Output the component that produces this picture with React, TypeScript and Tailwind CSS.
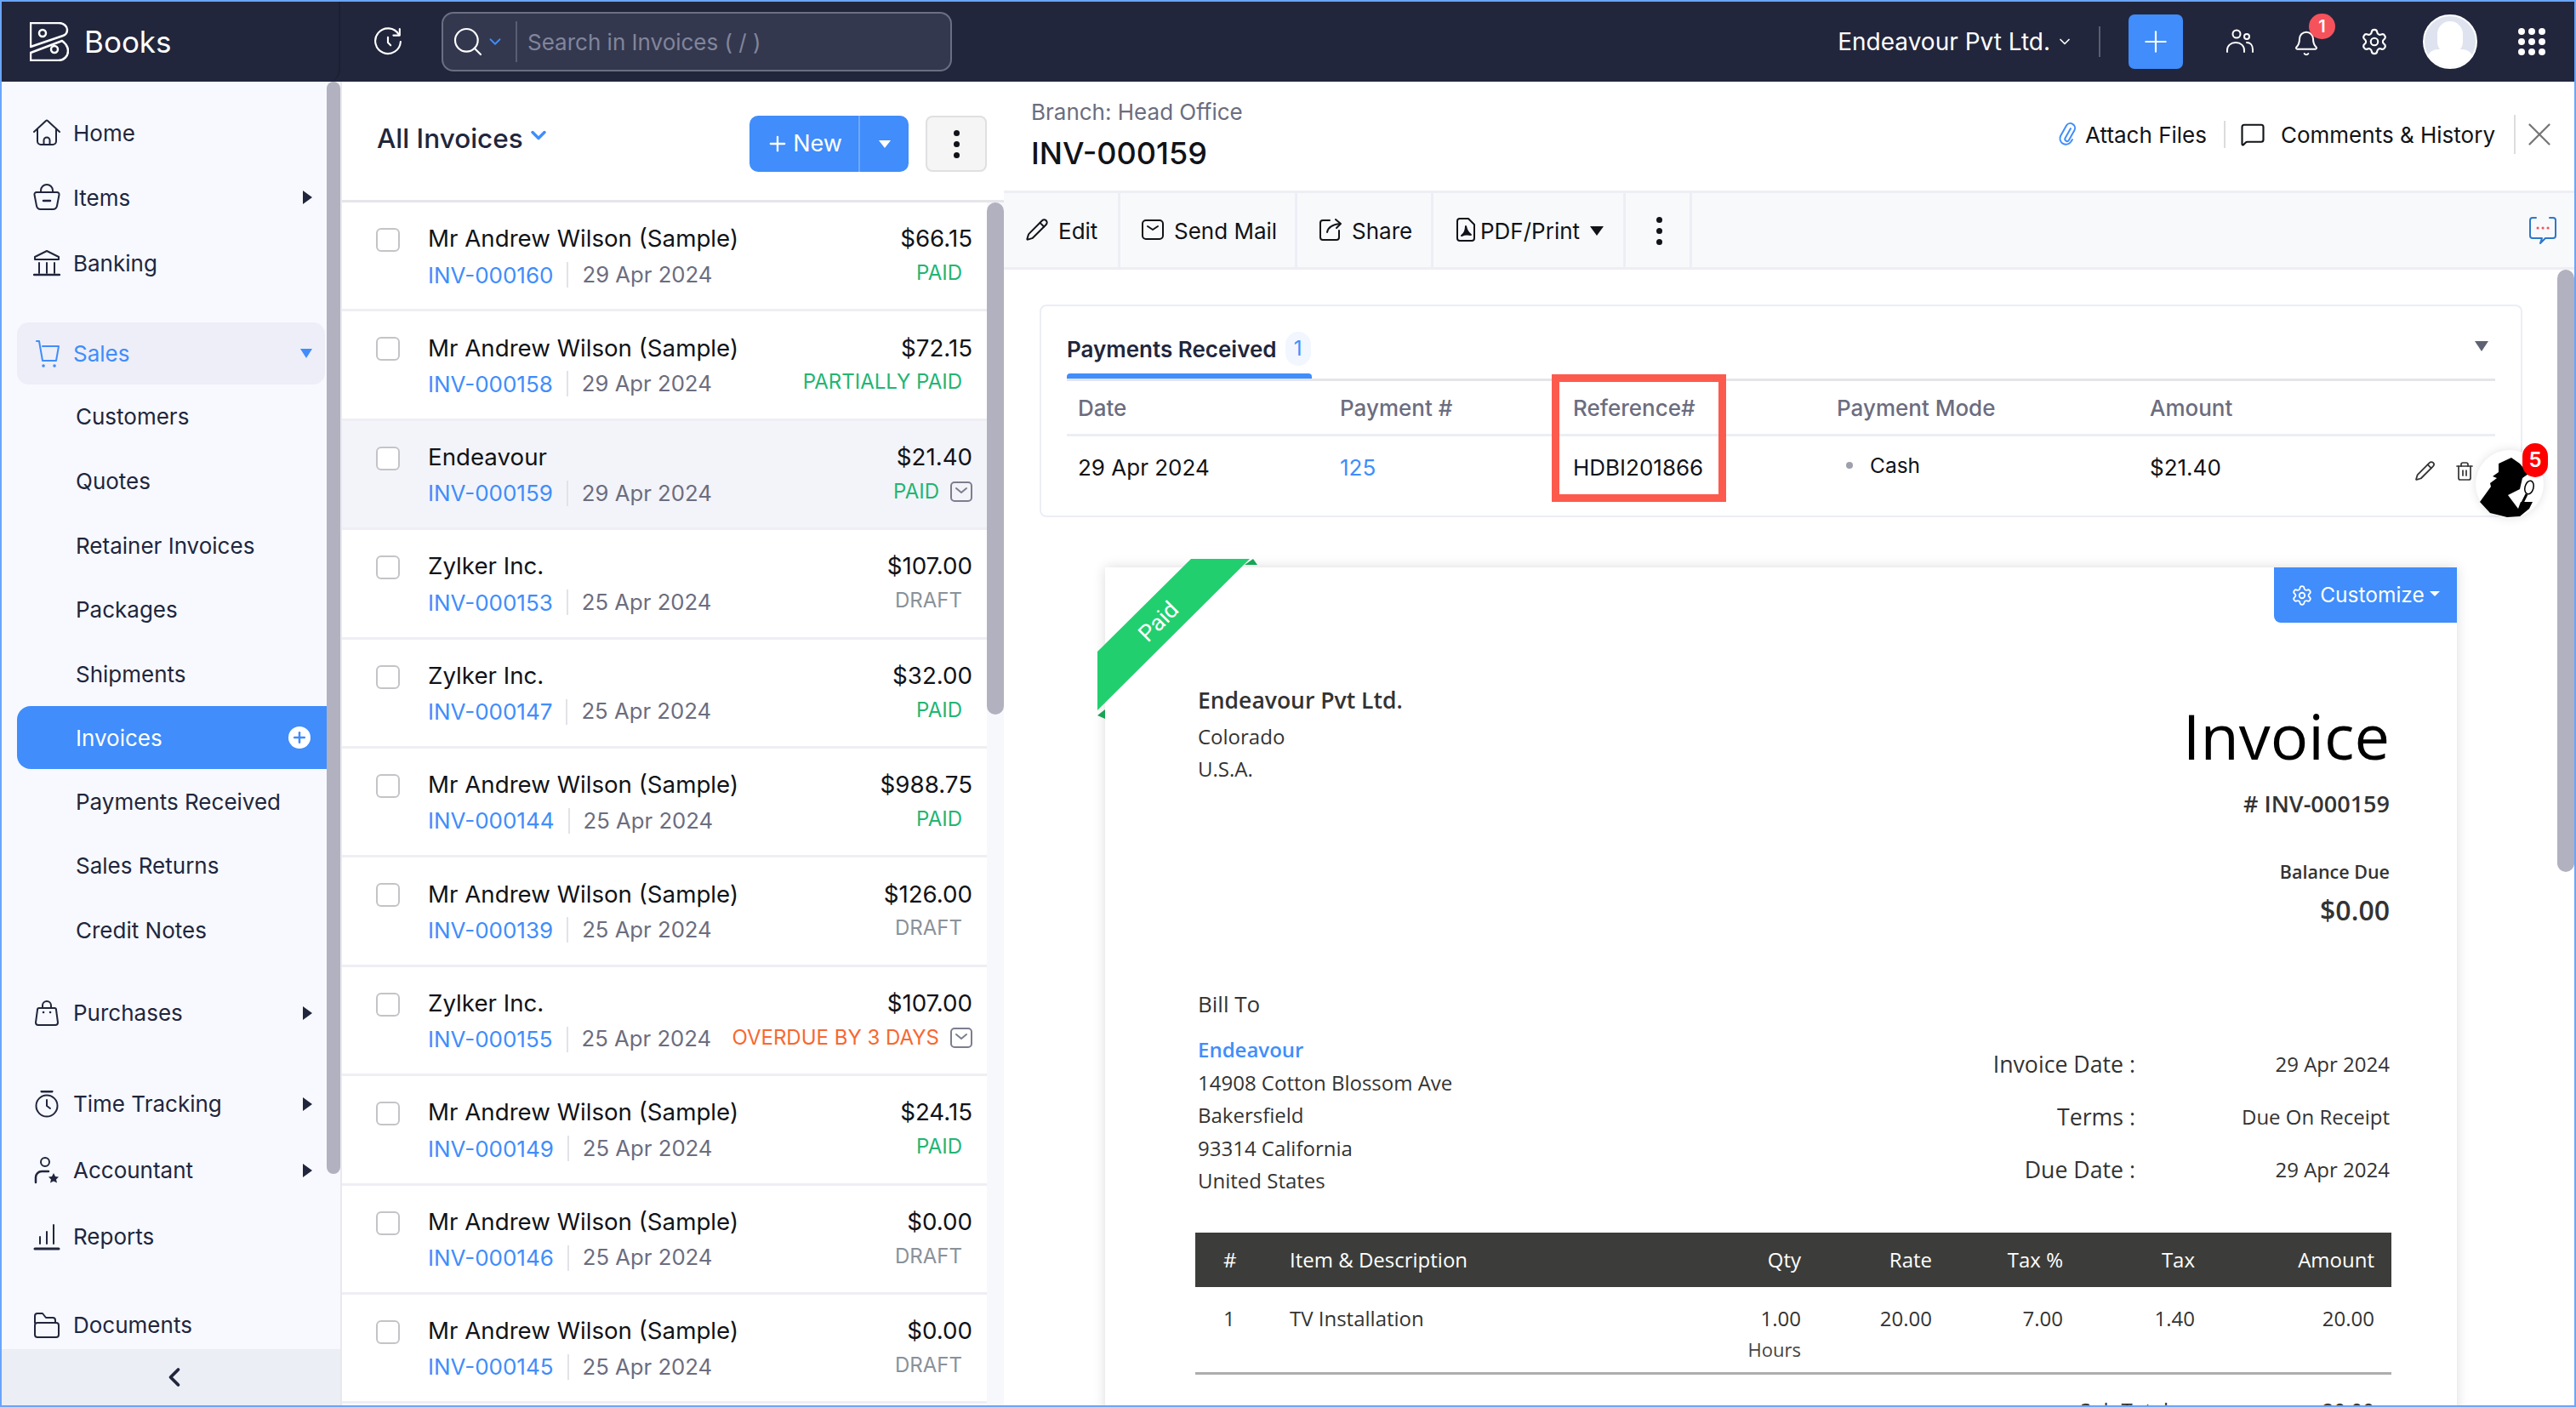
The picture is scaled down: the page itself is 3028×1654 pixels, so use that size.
import type { ReactNode } from 'react';
import { Bell, ChevronDown, ChevronLeft, MessageSquare, Pencil, Plus, Search, Settings, Trash2, X } from 'lucide-react';

type Invoice = {
  name: string;
  inv: string;
  date: string;
  amount: string;
  status: string;
  color: string;
  mail?: boolean;
  active?: boolean;
};

const PAID = 'text-[#22b573]';
const DRAFT = 'text-[#8a9199]';
const SAMPLE = 'Mr Andrew Wilson (Sample)';

const invoices: Invoice[] = [
  { name: SAMPLE, inv: 'INV-000160', date: '29 Apr 2024', amount: '$66.15', status: 'PAID', color: PAID },
  { name: SAMPLE, inv: 'INV-000158', date: '29 Apr 2024', amount: '$72.15', status: 'PARTIALLY PAID', color: PAID },
  { name: 'Endeavour', inv: 'INV-000159', date: '29 Apr 2024', amount: '$21.40', status: 'PAID', color: PAID, mail: true, active: true },
  { name: 'Zylker Inc.', inv: 'INV-000153', date: '25 Apr 2024', amount: '$107.00', status: 'DRAFT', color: DRAFT },
  { name: 'Zylker Inc.', inv: 'INV-000147', date: '25 Apr 2024', amount: '$32.00', status: 'PAID', color: PAID },
  { name: SAMPLE, inv: 'INV-000144', date: '25 Apr 2024', amount: '$988.75', status: 'PAID', color: PAID },
  { name: SAMPLE, inv: 'INV-000139', date: '25 Apr 2024', amount: '$126.00', status: 'DRAFT', color: DRAFT },
  { name: 'Zylker Inc.', inv: 'INV-000155', date: '25 Apr 2024', amount: '$107.00', status: 'OVERDUE BY 3 DAYS', color: 'text-[#f76831]', mail: true },
  { name: SAMPLE, inv: 'INV-000149', date: '25 Apr 2024', amount: '$24.15', status: 'PAID', color: PAID },
  { name: SAMPLE, inv: 'INV-000146', date: '25 Apr 2024', amount: '$0.00', status: 'DRAFT', color: DRAFT },
  { name: SAMPLE, inv: 'INV-000145', date: '25 Apr 2024', amount: '$0.00', status: 'DRAFT', color: DRAFT },
];

function Ico({ children, className = 'w-[32px] h-[32px]' }: { children: ReactNode; className?: string }) {
  return (
    <svg viewBox="0 0 32 32" fill="none" stroke="currentColor" strokeWidth="2" strokeLinecap="round" strokeLinejoin="round" className={className}>
      {children}
    </svg>
  );
}

const navIcons: Record<string, ReactNode> = {
  home: (
    <>
      <path d="M1 15 15 2a1.500 1.500 0 0 1 2 0l14 13" />
      <path d="M5 12v14a4 4 0 0 0 4 4h14a4 4 0 0 0 4-4V12" />
      <path d="M12.500 30v-5a3.500 3.500 0 0 1 7 0v5" />
    </>
  ),
  items: (
    <>
      <path d="M4 10h24a2.500 2.500 0 0 1 2.500 3L28 26a5 5 0 0 1-5 4H9a5 5 0 0 1-5-4L1.500 13A2.500 2.500 0 0 1 4 10Z" />
      <path d="M9 10V8a7 7 0 0 1 14 0v2" />
      <path d="M12 20h8" strokeWidth="2.500" />
    </>
  ),
  banking: (
    <>
      <path d="M16 2 30 9v3H2V9Z" />
      <path d="M7 16v12M16 16v12M25 16v12" />
      <path d="M1 30h30" strokeWidth="2.500" />
    </>
  ),
  sales: (
    <>
      <path d="M4 1h3l4 23h16l3-17H11" />
      <path d="M12 30h.1M25 30h.1" strokeWidth="3.500" />
    </>
  ),
  purchases: (
    <>
      <path d="M7 10h18a2 2 0 0 1 2 2l2 15a3 3 0 0 1-3 3H6a3 3 0 0 1-3-3l2-15a2 2 0 0 1 2-2Z" />
      <path d="M11 10V7a5 5 0 0 1 10 0v3" />
      <path d="M12 15h.1M20 15h.1" strokeWidth="2.500" />
    </>
  ),
  time: (
    <>
      <path d="M10 1h12" strokeWidth="3" />
      <circle cx="16" cy="18" r="12.500" />
      <path d="M16 11v7l4 3" />
    </>
  ),
  accountant: (
    <>
      <circle cx="14" cy="6" r="5" />
      <path d="M3 30v-6a7 7 0 0 1 7-7h8" strokeWidth="2.500" />
      <path d="m24 19 2 4 4 .500-3 3 1 4-4-2-4 2 1-4-3-3 4-.500Z" fill="currentColor" stroke="none" />
    </>
  ),
  reports: (
    <>
      <path d="M8 24v-8M16 24V10M24 24V2" />
      <path d="M2 30h28" strokeWidth="3" />
    </>
  ),
  documents: (
    <>
      <path d="M2 13V5a3 3 0 0 1 3-3h6l4 5h8a3 3 0 0 1 3 3v3" />
      <path d="M5 13h22a3 3 0 0 1 3 3v11a3 3 0 0 1-3 3H5a3 3 0 0 1-3-3V16a3 3 0 0 1 3-3Z" />
    </>
  ),
};

function Caret() {
  return <span className="w-0 h-0 border-y-[8px] border-y-transparent border-l-[11px] border-l-[#21263c]" />;
}

function NavItem({ icon, label, caret, className = '' }: { icon: string; label: string; caret?: boolean; className?: string }) {
  return (
    <div className={`h-[76px] flex items-center pl-[37px] pr-[17px] mr-[16px] text-[#21263c] ${className}`}>
      <Ico>{navIcons[icon]}</Ico>
      <span className="ml-[15px] text-[26px] flex-1">{label}</span>
      {caret && <Caret />}
    </div>
  );
}

function SubItem({ label }: { label: string }) {
  return <div className="h-[75.700px] flex items-center pl-[87px] text-[26px] text-[#21263c]">{label}</div>;
}

function Sidebar() {
  return (
    <aside className="relative w-[398px] shrink-0 flex flex-col bg-[#f7f9ff]">
      <nav className="flex-1 overflow-hidden pt-[22px]">
        <NavItem icon="home" label="Home" />
        <NavItem icon="items" label="Items" caret />
        <NavItem icon="banking" label="Banking" className="mt-[1px]" />
        <div className="h-[73px] mt-[32px] ml-[18px] mr-[18px] rounded-[14px] bg-[#edeef8] flex items-center pl-[19px] pr-[15px] text-[#408dfb]">
          <Ico>{navIcons.sales}</Ico>
          <span className="ml-[15px] text-[26px] flex-1">Sales</span>
          <span className="w-0 h-0 border-x-[7px] border-x-transparent border-t-[11px] border-t-[#408dfb]" />
        </div>
        <SubItem label="Customers" />
        <SubItem label="Quotes" />
        <SubItem label="Retainer Invoices" />
        <SubItem label="Packages" />
        <SubItem label="Shipments" />
        <div className="h-[74px] ml-[18px] mr-[14px] rounded-l-[16px] bg-[#408dfb] flex items-center pl-[69px] pr-[21px] text-white">
          <span className="text-[26px] flex-1">Invoices</span>
          <span className="w-[26px] h-[26px] rounded-full bg-white flex items-center justify-center">
            <Plus className="w-[20px] h-[20px] text-[#408dfb]" strokeWidth={3} />
          </span>
        </div>
        <SubItem label="Payments Received" />
        <SubItem label="Sales Returns" />
        <SubItem label="Credit Notes" />
        <NavItem icon="purchases" label="Purchases" caret className="mt-[21px]" />
        <NavItem icon="time" label="Time Tracking" caret className="mt-[31px]" />
        <NavItem icon="accountant" label="Accountant" caret className="mt-[2px]" />
        <NavItem icon="reports" label="Reports" className="mt-[2px]" />
        <NavItem icon="documents" label="Documents" className="mt-[28px]" />
      </nav>
      <div className="h-[66px] shrink-0 bg-[#eceef6] flex items-center justify-center pl-[8px] text-[#21263c]">
        <ChevronLeft className="w-[36px] h-[36px]" strokeWidth={2.500} />
      </div>
      <div className="absolute top-0 right-0 w-[16px] h-[1284px] rounded-full bg-[#b1b1bf]" />
    </aside>
  );
}

function TopBar() {
  return (
    <header className="h-[94px] shrink-0 flex items-center bg-[#21263c] text-white">
      <div className="w-[398px] h-full shrink-0 flex items-center pl-[33px] rounded-b-[14px] bg-[#21263c] border-r-2 border-r-[#1b2033]">
        <svg viewBox="0 0 46 46" fill="none" stroke="currentColor" strokeWidth="2.500" strokeLinejoin="round" className="w-[46px] h-[46px]">
          <path d="M1 1h33c6 0 10 4 10 8 0 3-2 6-5 7L1 29Z" />
          <path d="M1 36 38 22c4 3 7 7 7 12 0 6-5 11-11 11H1Z" />
          <circle cx="15" cy="13" r="4" />
          <circle cx="29" cy="32" r="4" />
        </svg>
        <span className="ml-[18px] text-[35px]">Books</span>
      </div>
      <svg viewBox="0 0 32 32" fill="none" stroke="currentColor" strokeWidth="2" strokeLinecap="round" strokeLinejoin="round" className="ml-[39px] w-[34px] h-[34px]">
        <path d="M28 8a14 14 0 1 0 2 8" />
        <path d="M29 2v7h-7" />
        <path d="M16 11v6l3 3" />
      </svg>
      <div className="ml-[46px] w-[600px] h-[70px] flex items-center rounded-[14px] border-2 border-[#6b6f82] bg-[#33384f]">
        <Search className="ml-[9px] w-[40px] h-[40px]" strokeWidth={1.300} />
        <ChevronDown className="ml-[1px] w-[22px] h-[22px] text-[#408dfb]" strokeWidth={2} />
        <span className="ml-[13px] w-[2px] h-[48px] bg-[#5a5e72]" />
        <span className="ml-[12px] text-[26px] text-[#82859a]">Search in Invoices ( / )</span>
      </div>
      <div className="ml-auto flex items-center h-full">
        <span className="text-[28px]">Endeavour Pvt Ltd.</span>
        <ChevronDown className="ml-[7px] w-[20px] h-[20px]" strokeWidth={2} />
        <span className="ml-[30px] w-[2px] h-[36px] bg-[#5a5e72]" />
        <div className="ml-[33px] w-[64px] h-[64px] rounded-[7px] bg-[#408dfb] flex items-center justify-center">
          <Plus className="w-[40px] h-[40px]" strokeWidth={1.300} />
        </div>
        <svg viewBox="0 0 32 32" fill="none" stroke="currentColor" strokeWidth="2" strokeLinecap="round" className="ml-[51px] w-[32px] h-[32px]">
          <circle cx="12" cy="7" r="4.500" />
          <circle cx="24" cy="10" r="3" />
          <path d="M1 28v-2c0-5 4-9 10-9s10 4 10 9v2" />
          <path d="M24 17c4 0 7 3 7 8v3" />
        </svg>
        <div className="relative ml-[46px] w-[32px] h-[36px] mt-[4px]">
          <Bell className="w-[32px] h-[36px]" strokeWidth={1.500} />
          <span className="absolute -top-[17px] left-[19px] w-[31px] h-[30px] rounded-full bg-[#f5525c] flex items-center justify-center text-[20px] font-semibold">1</span>
        </div>
        <Settings className="ml-[47px] w-[34px] h-[34px]" strokeWidth={1.500} />
        <div className="ml-[40px] w-[64px] h-[64px] rounded-full border-2 border-white bg-[#dfe3ef] overflow-hidden flex flex-col items-center">
          <span className="mt-[6px] w-[30px] h-[42px] rounded-full bg-white" />
          <span className="-mt-[6px] w-[56px] h-[22px] rounded-t-[14px] bg-white" />
        </div>
        <div className="ml-[48px] mr-[34px] grid grid-cols-3 gap-[4px]">
          {Array.from({ length: 9 }).map((_, i) => (
            <span key={i} className="w-[8px] h-[8px] rounded-full bg-white" />
          ))}
        </div>
      </div>
    </header>
  );
}

function MailTag() {
  return (
    <svg viewBox="0 0 26 24" fill="none" stroke="#7c7e8f" strokeWidth="2" strokeLinecap="round" strokeLinejoin="round" className="ml-[13px] w-[26px] h-[24px]">
      <rect x="1" y="1" width="24" height="22" rx="4" />
      <path d="m7 8 6 5 6-5" />
    </svg>
  );
}

function InvoiceRow({ row }: { row: Invoice }) {
  return (
    <div className={`h-[128.400px] shrink-0 flex pt-[26px] pl-[40px] pr-[17px] border-b-[3px] border-b-[#eeeef4] whitespace-nowrap ${row.active ? 'bg-[#f3f4f9]' : 'bg-white'}`}>
      <span className="mt-[4px] w-[28px] h-[28px] shrink-0 rounded-[6px] border-2 border-[#c4c4c8] bg-white" />
      <div className="ml-[33px] flex-1 min-w-0">
        <div className="h-[34px] flex items-center justify-between text-[27.700px] text-[#111318]">
          <span>{row.name}</span>
          <span>{row.amount}</span>
        </div>
        <div className="mt-[8px] h-[34px] flex items-center">
          <span className="text-[26px] text-[#408dfb]">{row.inv}</span>
          <span className="mx-[16px] w-[2px] h-[30px] bg-[#e2e2e8]" />
          <span className="text-[25.700px] text-[#6b6d7f]">{row.date}</span>
          <div className={`ml-auto flex items-center -mt-[4px] text-[24px] ${row.color} ${row.mail ? '' : 'pr-[12px]'}`}>
            {row.status}
            {row.mail && <MailTag />}
          </div>
        </div>
      </div>
    </div>
  );
}

function InvoiceList() {
  return (
    <section className="relative w-[780px] shrink-0 flex flex-col border-l-2 border-l-[#e8e8ee] bg-white">
      <div className="h-[142px] shrink-0 flex items-start pt-[40px] pl-[41px] pr-[20px] border-b-[3px] border-b-[#e5e5ea]">
        <span className="mt-[3px] text-[31.500px] font-medium text-[#21263c]">All Invoices</span>
        <ChevronDown className="ml-[4px] mt-[9px] w-[28px] h-[28px] text-[#408dfb]" strokeWidth={3} />
        <div className="ml-auto w-[187px] h-[66px] flex rounded-[10px] bg-[#408dfb] text-white">
          <div className="w-[130px] flex items-center justify-center border-r-2 border-r-[#6ea8fb] text-[27px]">
            <Plus className="w-[28px] h-[28px] mr-[4px]" strokeWidth={2} />
            New
          </div>
          <div className="flex-1 flex items-center justify-center">
            <span className="w-0 h-0 border-x-[7px] border-x-transparent border-t-[9px] border-t-white" />
          </div>
        </div>
        <div className="ml-[20px] w-[72px] h-[66px] rounded-[8px] border-2 border-[#e0e0e2] bg-[#f5f5f5] flex flex-col items-center justify-center gap-[6px]">
          <span className="w-[7px] h-[7px] rounded-full bg-[#111318]" />
          <span className="w-[7px] h-[7px] rounded-full bg-[#111318]" />
          <span className="w-[7px] h-[7px] rounded-full bg-[#111318]" />
        </div>
      </div>
      <div className="flex-1 min-h-0 flex overflow-hidden">
        <div className="w-[758px] shrink-0 flex flex-col">
          {invoices.map((row) => (
            <InvoiceRow key={row.inv} row={row} />
          ))}
        </div>
        <div className="flex-1 bg-[#f7f8fb]">
          <div className="h-[602px] rounded-full bg-[#b1b1bf]" />
        </div>
      </div>
    </section>
  );
}

function ToolItem({ width, children }: { width: string; children: ReactNode }) {
  return <div className={`${width} h-full shrink-0 flex items-center pt-[2px] border-r-[3px] border-r-[#eeeef5] text-[26px] text-[#111318]`}>{children}</div>;
}

function Toolbar() {
  return (
    <div className="h-[93px] shrink-0 flex items-center bg-[#f8f9fb] border-y-[3px] border-y-[#eeeef4]">
      <ToolItem width="w-[137px] pl-[25px]">
        <Pencil className="w-[28px] h-[28px] mr-[11px] -mt-[4px]" strokeWidth={1.700} />
        Edit
      </ToolItem>
      <ToolItem width="w-[208px] pl-[25px]">
        <svg viewBox="0 0 26 26" fill="none" stroke="currentColor" strokeWidth="2" strokeLinecap="round" strokeLinejoin="round" className="w-[26px] h-[26px] mr-[12px] -mt-[4px]">
          <rect x="1" y="2" width="24" height="22" rx="4" />
          <path d="m7 9 6 4 6-4" />
        </svg>
        Send Mail
      </ToolItem>
      <ToolItem width="w-[160px] pl-[25px]">
        <svg viewBox="0 0 28 28" fill="none" stroke="currentColor" strokeWidth="2" strokeLinecap="round" strokeLinejoin="round" className="w-[28px] h-[28px] mr-[11px] -mt-[4px]">
          <path d="M13 3H5a3 3 0 0 0-3 3v17a3 3 0 0 0 3 3h16a3 3 0 0 0 3-3v-8" />
          <path d="M10 17c1-5 5-9 15-10" />
          <path d="m20 2 6 5-5 5" />
        </svg>
        Share
      </ToolItem>
      <ToolItem width="w-[226px] pl-[25px]">
        <svg viewBox="0 0 24 28" fill="none" stroke="currentColor" strokeWidth="2" strokeLinecap="round" strokeLinejoin="round" className="w-[24px] h-[28px] mr-[6px] -mt-[4px]">
          <path d="M6 1h10l7 7v16a3 3 0 0 1-3 3H6a3 3 0 0 1-3-3V4a3 3 0 0 1 3-3Z" />
          <path d="M8 21c3-2 5-6 5-11 1 5 3 8 6 10-4-1-7-1-11 1Z" fill="currentColor" />
        </svg>
        PDF/Print
        <span className="ml-[12px] w-0 h-0 border-x-[8px] border-x-transparent border-t-[11px] border-t-[#111318]" />
      </ToolItem>
      <ToolItem width="w-[78px] justify-center">
        <div className="flex flex-col gap-[6px] ml-[3px]">
          <span className="w-[7px] h-[7px] rounded-full bg-[#111318]" />
          <span className="w-[7px] h-[7px] rounded-full bg-[#111318]" />
          <span className="w-[7px] h-[7px] rounded-full bg-[#111318]" />
        </div>
      </ToolItem>
      <svg viewBox="0 0 32 32" fill="none" strokeLinecap="round" strokeLinejoin="round" className="ml-auto mr-[21px] w-[32px] h-[32px]">
        <path d="M8 1H4a3 3 0 0 0-3 3v18a3 3 0 0 0 3 3h11l-2 6 6-6h9a3 3 0 0 0 3-3V4a3 3 0 0 0-3-3h-4" stroke="#2e78c8" strokeWidth="2" />
        <path d="M10 13h.1M16 13h.1M22 13h.1" stroke="#f5525c" strokeWidth="3" />
      </svg>
    </div>
  );
}

function PaymentsCard() {
  return (
    <div className="relative ml-[42px] w-[1743px] h-[250px] rounded-[8px] border-2 border-[#eceef4] bg-white px-[30px]">
      <div className="h-[85px] flex items-start pt-[31px] relative">
        <span className="text-[26px] font-semibold text-[#21263c]">Payments Received</span>
        <span className="ml-[10px] -mt-[1px] w-[30px] h-[40px] rounded-full bg-[#f1f6ff] flex items-center justify-center text-[24px] text-[#408dfb]">1</span>
        <span className="absolute right-[8px] top-[41px] w-0 h-0 border-x-[8px] border-x-transparent border-t-[12px] border-t-[#5f6272]" />
      </div>
      <div className="relative h-[68px] flex items-center border-t-[3px] border-t-[#e4e4ea] border-b-[3px] border-b-[#eceef4] pl-[13px] text-[26px] font-medium text-[#6b6d7f]">
        <span className="absolute -top-[9px] left-0 w-[288px] h-[6px] rounded-t-[4px] bg-[#408dfb]" />
        <span className="w-[308px]">Date</span>
        <span className="w-[274px]">Payment #</span>
        <span className="w-[310px]">Reference#</span>
        <span className="w-[368px]">Payment Mode</span>
        <span>Amount</span>
      </div>
      <div className="h-[72px] flex items-center pl-[13px] text-[26px] text-[#111318]">
        <span className="w-[308px]">29 Apr 2024</span>
        <span className="w-[274px] text-[#408dfb]">125</span>
        <span className="w-[310px]">HDBI201866</span>
        <span className="w-[368px] pl-[11px] flex items-center -mt-[4px] text-[24.500px]">
          <span className="w-[8px] h-[8px] rounded-full bg-[#9ea0ac] mr-[20px]" />
          Cash
        </span>
        <span>$21.40</span>
        <div className="ml-auto mr-[24px] mt-[9px] flex items-center gap-[22px] text-[#333]">
          <Pencil className="w-[25px] h-[25px]" strokeWidth={1.700} />
          <Trash2 className="w-[24px] h-[26px]" strokeWidth={1.700} />
        </div>
      </div>
      {/* annotation box around the reference column */}
      <div className="absolute left-[600px] top-[80px] w-[205px] h-[150px] border-[9px] border-[#fd5a4e]" />
    </div>
  );
}

function ChatWidget() {
  return (
    <div className="absolute left-[1730px] top-[212px] w-[80px] h-[80px] rounded-full bg-white shadow-[0_0_12px_rgba(0,0,0,0.12)]">
      <svg viewBox="0 0 80 80" className="w-[80px] h-[80px]">
        <path d="M5 61 18 43l-1-4 8-6-5-2 7-5V16L42 9l10 7 10 12-7 5-3 13-14 7 12 16 3-8h14l-4 8-11 9-15 1-20-5Z" fill="#000" />
        <ellipse cx="63" cy="44" rx="5" ry="8" transform="rotate(15 63 44)" fill="#fff" stroke="#000" strokeWidth="1.500" />
        <path d="M60 52 55 62" stroke="#000" strokeWidth="3" />
      </svg>
      <span className="absolute left-[55px] -top-[8px] w-[30px] h-[40px] rounded-full bg-[#f00] flex items-center justify-center text-[24px] font-semibold text-white">5</span>
    </div>
  );
}

function PaidRibbon() {
  return (
    <>
      <svg viewBox="0 0 190 190" className="absolute -left-[9px] -top-[10px] w-[190px] h-[190px]">
        <polygon points="173,7 183,0 188,7" fill="#17a556" />
        <polygon points="0,184 9,177 9,188" fill="#17a556" />
        <polygon points="110,0 179,0 0,178 0,109" fill="#21cf6f" />
      </svg>
      <span className="absolute left-[63px] top-[64px] -translate-x-1/2 -translate-y-1/2 -rotate-45 font-['Roboto',sans-serif] text-[27px] text-white">Paid</span>
    </>
  );
}

function Paper() {
  return (
    <div className="relative ml-[119px] mt-[59px] w-[1589px] pl-[109px] pr-[79px] pt-[138px] bg-white shadow-[0_0_14px_rgba(0,0,0,0.14)] font-['Open_Sans',sans-serif] text-[24px] text-[#333]">
      <PaidRibbon />
      <div className="absolute top-0 right-0 w-[215px] h-[65px] rounded-bl-[8px] bg-[#408dfb] flex items-center justify-center font-['Inter',sans-serif] text-[24.500px] text-white">
        <Settings className="w-[26px] h-[26px] mr-[8px]" strokeWidth={1.700} />
        Customize
        <span className="ml-[6px] -mt-[4px] w-0 h-0 border-x-[6px] border-x-transparent border-t-[6px] border-t-white" />
      </div>
      <div className="flex justify-between items-start">
        <div>
          <div className="h-[38px] flex items-center text-[26.500px] font-semibold">Endeavour Pvt Ltd.</div>
          <div className="mt-[4px] h-[38px] flex items-center">Colorado</div>
          <div className="h-[37px] flex items-center">U.S.A.</div>
        </div>
        <div className="flex flex-col items-end">
          <div className="mt-[9px] h-[100px] flex items-center text-[74px] text-black">Invoice</div>
          <div className="mt-[11px] h-[40px] flex items-center text-[27px] font-semibold">{'# INV-000159'}</div>
          <div className="mt-[45px] h-[30px] flex items-center text-[21.500px] font-semibold">Balance Due</div>
          <div className="mt-[8px] h-[44px] flex items-center text-[32px] font-semibold">$0.00</div>
        </div>
      </div>
      <div className="mt-[69px] flex justify-between items-start">
        <div>
          <div className="h-[38px] flex items-center text-[26px]">Bill To</div>
          <div className="mt-[16px] h-[38.500px] flex items-center font-semibold text-[#408dfb]">Endeavour</div>
          <div className="h-[38.500px] flex items-center">14908 Cotton Blossom Ave</div>
          <div className="h-[38.500px] flex items-center">Bakersfield</div>
          <div className="h-[38.500px] flex items-center">93314 California</div>
          <div className="h-[38.500px] flex items-center">United States</div>
        </div>
        <div className="mt-[59px]">
          {[
            ['Invoice Date :', '29 Apr 2024'],
            ['Terms :', 'Due On Receipt'],
            ['Due Date :', '29 Apr 2024'],
          ].map(([label, value]) => (
            <div key={label} className="h-[62px] flex items-center">
              <span className="w-[300px] text-right text-[26.700px]">{label}</span>
              <span className="w-[299px] text-right">{value}</span>
            </div>
          ))}
        </div>
      </div>
      <div className="mt-[41px] -ml-[3px] w-[1406px]">
        <div className="h-[64px] grid grid-cols-[111px_420px_181px_154px_154px_155px_211px] items-center bg-[#3c3d3a] text-white">
          <span className="pl-[33px]">#</span>
          <span>{'Item & Description'}</span>
          <span className="text-right">Qty</span>
          <span className="text-right">Rate</span>
          <span className="text-right">Tax %</span>
          <span className="text-right">Tax</span>
          <span className="text-right">Amount</span>
        </div>
        <div className="h-[103px] pt-[19px] border-b-[3px] border-b-[#adadad] grid grid-cols-[111px_420px_181px_154px_154px_155px_211px] items-start">
          <span className="pl-[33px]">1</span>
          <span>TV Installation</span>
          <span className="text-right">
            1.00
            <div className="mt-[2px] text-[22px] text-[#444]">Hours</div>
          </span>
          <span className="text-right">20.00</span>
          <span className="text-right">7.00</span>
          <span className="text-right">1.40</span>
          <span className="text-right">20.00</span>
        </div>
        <div className="mt-[24px] grid grid-cols-[1044px_211px] justify-end mr-[20px] pb-[20px]">
          <span className="text-right pr-[31px]">Sub Total</span>
          <span className="text-right">20.00</span>
        </div>
      </div>
    </div>
  );
}

function InvoiceDetail() {
  return (
    <main className="relative flex-1 min-w-0 flex flex-col overflow-hidden bg-white">
      <div className="h-[128px] shrink-0 flex pl-[32px] pr-[18px] pt-[17px] items-start">
        <div>
          <div className="h-[36px] flex items-center text-[26px] text-[#6b6d7f]">Branch: Head Office</div>
          <div className="mt-[7px] h-[48px] flex items-center text-[36px] font-medium text-[#111318]">INV-000159</div>
        </div>
        <div className="ml-auto mt-[22px] h-[46px] flex items-center text-[26px] text-[#111318]">
          <svg viewBox="0 0 22 30" fill="none" stroke="#408dfb" strokeWidth="2" strokeLinecap="round" className="w-[22px] h-[30px] mr-[10px]">
            <path d="M15 8 8.500 19.500a2.500 2.500 0 0 0 4.300 2.500L19.500 10a5.500 5.500 0 0 0-9.500-5.500L3 17a7 7 0 0 0 12 7l2-3" />
          </svg>
          Attach Files
          <span className="ml-[20px] mr-[17px] w-[2px] h-[32px] bg-[#dcdcdc]" />
          <MessageSquare className="w-[30px] h-[30px] mr-[18px]" strokeWidth={1.700} />
          Comments {'&'} History
          <span className="ml-[22px] mr-[5px] w-[2px] h-[46px] bg-[#dcdcdc]" />
          <X className="w-[46px] h-[46px] text-[#777]" strokeWidth={1.200} />
        </div>
      </div>
      <Toolbar />
      <div className="relative flex-1 min-h-0 overflow-hidden">
        <div className="pt-[41px]">
          <PaymentsCard />
          <Paper />
        </div>
        <ChatWidget />
        <div className="absolute top-0 right-0 w-[20px] h-[708px] rounded-full bg-[#b1b1bf]" />
      </div>
    </main>
  );
}

export default function App() {
  return (
    <div className="w-[3028px] h-[1654px] overflow-hidden flex flex-col border-2 border-[#6aa5fb] font-['Inter',sans-serif]">
      <TopBar />
      <div className="flex-1 min-h-0 flex">
        <Sidebar />
        <InvoiceList />
        <InvoiceDetail />
      </div>
    </div>
  );
}
